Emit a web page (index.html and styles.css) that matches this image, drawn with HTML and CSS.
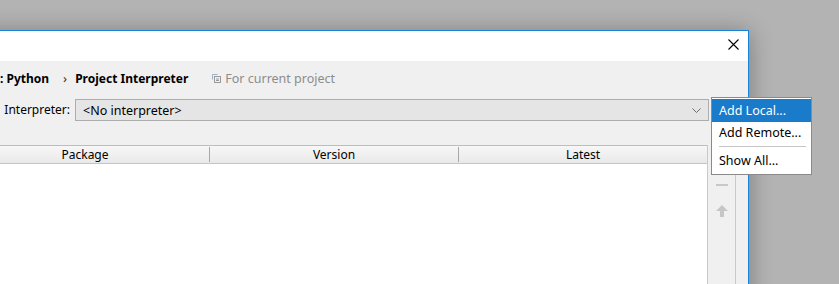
FILE: index.html
```html
<!DOCTYPE html>
<html>
<head>
<meta charset="utf-8">
<link rel="stylesheet" href="styles.css">
</head>
<body>
<div class="dialog">
  <div class="titlebar">
    <svg class="close" width="11" height="11" viewBox="0 0 11 11"><path d="M0.5 0.5L10.5 10.5M10.5 0.5L0.5 10.5" stroke="#000" stroke-width="1.1" fill="none"/></svg>
  </div>
  <div class="content">
    <div class="breadcrumb">
      <span class="crumb">: Python</span>
      <span class="chev">›</span>
      <span class="crumb">Project Interpreter</span>
      <span class="scope">
        <svg class="scope-icon" width="9" height="9" viewBox="0 0 9 9"><path d="M0.5 5.5V0.5H5.5" stroke="#9fb0c4" fill="none"/><rect x="2.5" y="2.5" width="6" height="6" fill="#f0f0f0" stroke="#9a9a9a"/><path d="M4 5H7M4 6.5H7" stroke="#9a9a9a"/></svg>
        For current project
      </span>
    </div>
    <div class="interp-row">
      <label class="interp-label">Interpreter:</label>
      <div class="combo">
        <span class="combo-text">&lt;No interpreter&gt;</span>
        <svg class="combo-arrow" width="9" height="5" viewBox="0 0 9 5"><path d="M0.5 0.5L4.5 4.5L8.5 0.5" stroke="#6d6d6d" fill="none"/></svg>
      </div>
      <div class="gear"></div>
    </div>
    <div class="packages">
      <div class="table">
        <div class="thead">
          <div class="th">Package</div>
          <div class="th">Version</div>
          <div class="th">Latest</div>
        </div>
        <div class="tbody"></div>
      </div>
      <div class="toolbar">
        <div class="tool"><svg width="12" height="12" viewBox="0 0 12 12"><path d="M1 6H11M6 1V11" stroke="#3f8f3f" stroke-width="2"/></svg></div>
        <div class="tool"><svg width="12" height="12" viewBox="0 0 12 12"><path d="M0 6H12" stroke="#c8c8c8" stroke-width="2"/></svg></div>
        <div class="tool"><svg width="12" height="12" viewBox="0 0 12 12"><path d="M6 0L12 6H8V12H4V6H0Z" fill="#c6c6c6"/></svg></div>
      </div>
    </div>
  </div>
</div>
<div class="popup">
  <div class="item active">Add Local...</div>
  <div class="item">Add Remote...</div>
  <div class="separator"></div>
  <div class="item">Show All...</div>
</div>
</body>
</html>
```
FILE: styles.css
```css
html, body {
  margin: 0;
  padding: 0;
}
body {
  width: 839px;
  height: 284px;
  overflow: hidden;
  background: #b3b3b3;
  font-family: "Noto Sans", "Open Sans", sans-serif;
  font-size: 12px;
  color: #000;
  position: relative;
}
.dialog {
  box-sizing: border-box;
  width: 801px;
  height: 320px;
  margin-top: 30px;
  margin-left: -52px;
  border: 1px solid #1883d7;
  background: #f0f0f0;
  box-shadow: 0 2px 22px rgba(0, 0, 0, 0.32);
  display: flex;
  flex-direction: column;
}
.titlebar {
  height: 30px;
  background: #fff;
  display: flex;
  justify-content: flex-end;
  align-items: flex-start;
}
.close {
  margin-top: 8px;
  margin-right: 9px;
}
.content {
  flex: 1;
  padding: 0 12px 0 12px;
  display: flex;
  flex-direction: column;
}
.breadcrumb {
  height: 34px;
  display: flex;
  align-items: center;
  padding-left: 39px;
  white-space: nowrap;
}
.crumb {
  font-weight: bold;
  font-size: 12px;
}
.chev {
  margin: 0 8px 0 14px;
  color: #333;
  font-size: 13px;
}
.scope {
  margin-left: 24px;
  color: #8c8c8c;
  font-size: 12.5px;
  display: flex;
  align-items: center;
}
.scope-icon {
  margin-right: 4px;
}
.interp-row {
  margin-top: 4px;
  height: 22px;
  display: flex;
  align-items: stretch;
}
.interp-label {
  width: 109px;
  margin-right: 5px;
  text-align: right;
  line-height: 22px;
  flex: none;
}
.combo {
  flex: 1;
  box-sizing: border-box;
  border: 1px solid #adadad;
  background: #e5e5e5;
  display: flex;
  align-items: center;
  justify-content: space-between;
  padding: 0 7px 0 7px;
  font-size: 12.5px;
}
.gear {
  width: 23px;
  margin-left: 4px;
  flex: none;
}
.packages {
  margin-top: 24px;
  flex: 1;
  display: flex;
}
.table {
  flex: 1;
  display: flex;
  flex-direction: column;
  border-right: 1px solid #c9c9c9;
}
.thead {
  display: flex;
  height: 17px;
  border-top: 1px solid #bdbdbd;
  border-bottom: 1px solid #c4c4c4;
  background: linear-gradient(#f7f7f7, #e9e9e9);
}
.th {
  flex: 1;
  text-align: center;
  line-height: 17px;
  border-left: 1px solid #b6b6b6;
}
.th:first-child {
  border-left: none;
}
.th + .th {
  border-image: linear-gradient(transparent 2px, #a8a8a8 2px, #a8a8a8 15px, transparent 15px) 1;
}
.tbody {
  flex: 1;
  background: #fff;
}
.toolbar {
  width: 27px;
  border-right: 1px solid #c9c9c9;
  display: flex;
  flex-direction: column;
  align-items: center;
  padding-top: 8px;
  gap: 14px;
}
.tool {
  width: 12px;
  height: 12px;
  display: flex;
}
.popup {
  position: absolute;
  left: 711px;
  top: 97px;
  width: 101px;
  box-sizing: border-box;
  border: 1px solid #8a8a8a;
  background: #fff;
  padding: 1px 0 2px;
}
.item {
  height: 22px;
  line-height: 22px;
  padding-left: 7px;
  font-size: 12.5px;
  color: #000;
}
.item.active {
  height: 23px;
  line-height: 24px;
  background: #1a7bcb;
  color: #fff;
}
.separator {
  height: 1px;
  background: #c6c6c6;
  margin: 2px 5px 3px 7px;
}
```
